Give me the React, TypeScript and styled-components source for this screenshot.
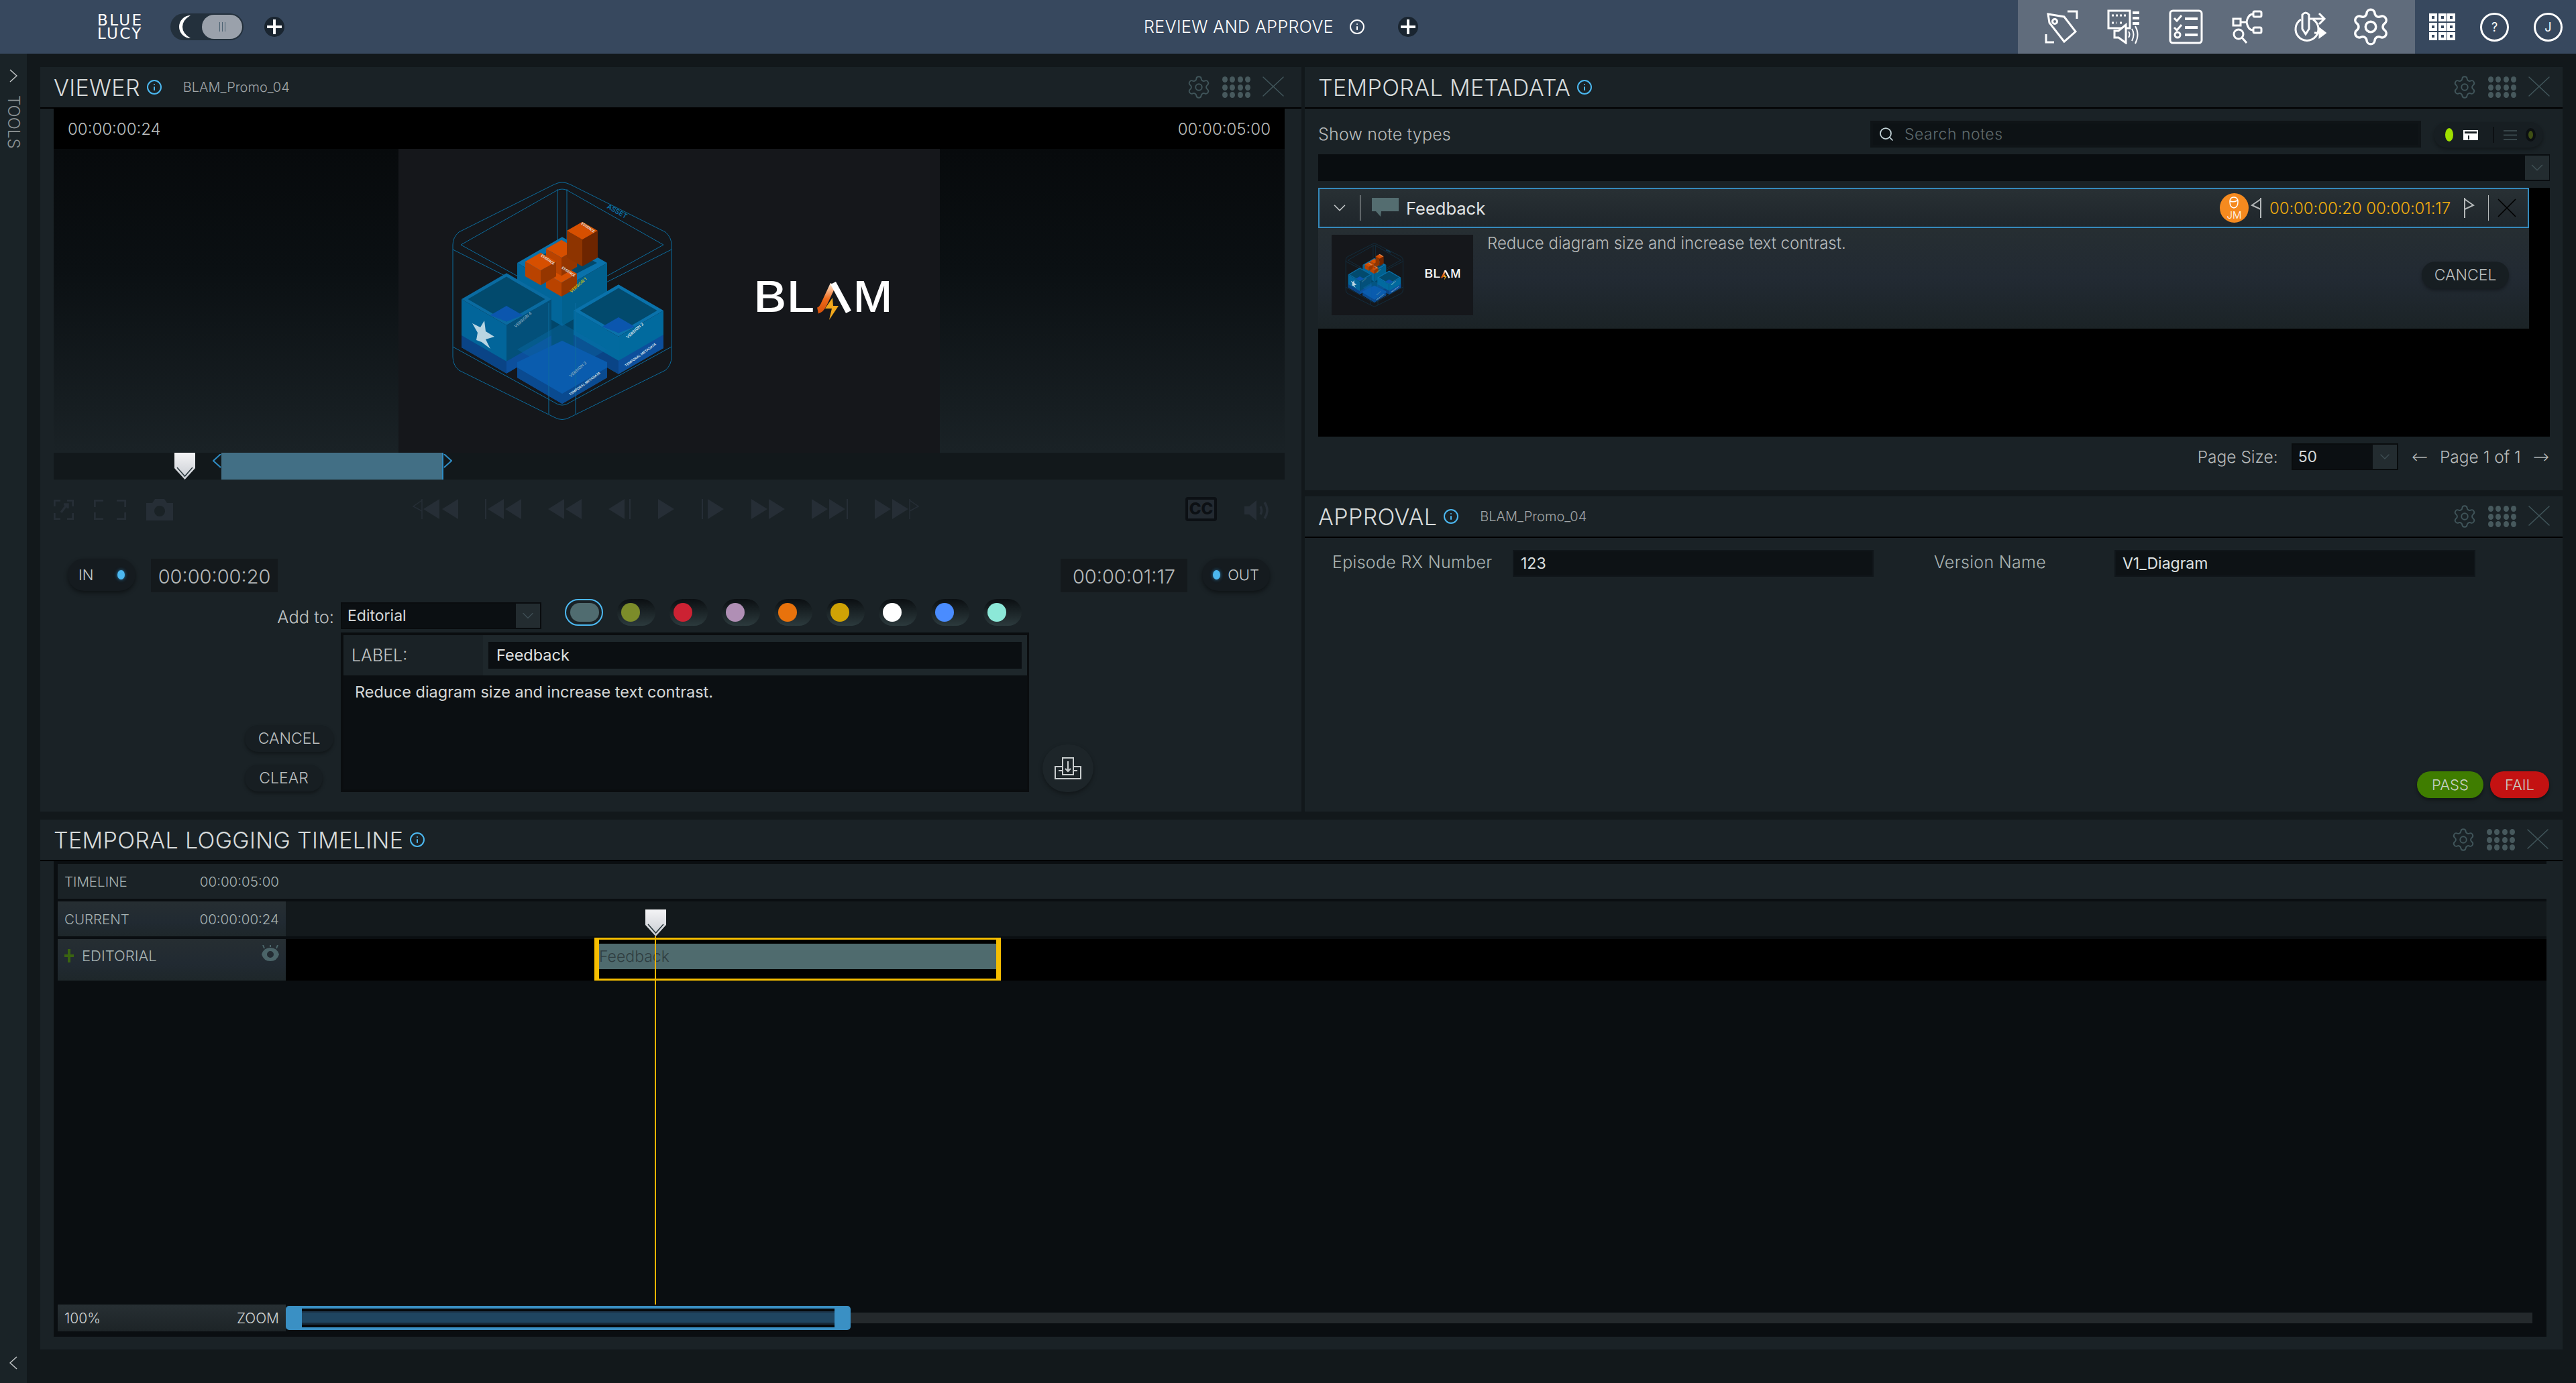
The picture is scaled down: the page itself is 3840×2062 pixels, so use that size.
import React from 'react';
import styled, { createGlobalStyle } from 'styled-components';
import { ChevronDown, Info, Search, Settings, X } from 'lucide-react';

const GlobalStyle = createGlobalStyle`
  html, body {
    margin: 0;
    height: 2062px;
    overflow: hidden;
    background: #12181b;
    font-family: "Inter", "Open Sans", sans-serif;
    font-weight: 300;
    color: #c9cdce;
  }
  * { box-sizing: border-box; }
`;

const Shell = styled.div`
  width: 3840px;
  height: 2062px;
  display: flex;
  flex-direction: column;
`;

/* top bar */
const TopBar = styled.header`
  height: 80px;
  flex: none;
  display: flex;
  align-items: center;
  background: #37485e;
`;
const BrandGroup = styled.div`
  width: 1705px;
  flex: none;
  display: flex;
  align-items: center;
  padding-left: 145px;
`;
const Logo = styled.div`
  width: 70px;
  font-family: "DejaVu Sans", sans-serif;
  font-size: 23px;
  line-height: 20px;
  font-weight: 400;
  letter-spacing: 2.4px;
  color: #fff;
  white-space: nowrap;
`;
const ThemeToggle = styled.div`
  margin-left: 39px;
  width: 109px;
  height: 40px;
  border-radius: 20px;
  background: #23303c;
  display: flex;
  align-items: center;
  justify-content: space-between;
  padding: 0 2px 0 10px;
`;
const Knob = styled.div`
  width: 60px;
  height: 36px;
  border-radius: 18px;
  background: #9aa1ab;
  display: flex;
  align-items: center;
  justify-content: center;
  gap: 3px;
  & > i {
    width: 1px;
    height: 14px;
    background: #4b6272;
  }
`;
const RoundPlus = styled.button<{ $gap: number }>`
  margin-left: ${(p) => p.$gap}px;
  width: 30px;
  height: 30px;
  padding: 0;
  border: none;
  border-radius: 50%;
  background: #1a2530;
  display: flex;
  align-items: center;
  justify-content: center;
`;
const PageTitle = styled.div`
  width: 287px;
  font-size: 25px;
  font-weight: 300;
  letter-spacing: 0.45px;
  color: #fff;
  white-space: nowrap;
`;
const CenterInfo = styled(Info)`
  margin-left: 19px;
  color: #fff;
`;
const ToolTray = styled.nav`
  margin-left: auto;
  width: 592px;
  height: 80px;
  background: #606c7c;
  display: flex;
  align-items: center;
  gap: 43px;
  padding-left: 40px;
`;
const UserTray = styled.div`
  width: 240px;
  display: flex;
  align-items: center;
  gap: 37px;
  padding-left: 21px;
`;
const UserCircle = styled.div`
  width: 43px;
  height: 43px;
  border: 3px solid #fff;
  border-radius: 50%;
  display: flex;
  align-items: center;
  justify-content: center;
  font-size: 18px;
  font-weight: 400;
  color: #fff;
`;

/* page layout */
const Main = styled.div`
  flex: 1;
  display: flex;
  min-height: 0;
`;
const SideRail = styled.aside`
  width: 40px;
  flex: none;
  background: #1a2327;
  display: flex;
  flex-direction: column;
  align-items: center;
  padding: 23px 0 20px;
  color: #c4c8c9;
`;
const RailLabel = styled.div`
  margin-top: 19px;
  writing-mode: vertical-rl;
  font-size: 24px;
  line-height: 1;
  color: #8d9496;
`;
const RailEnd = styled.div`
  margin-top: auto;
  display: flex;
`;
const Workspace = styled.div`
  flex: 1;
  padding: 20px 20px 50px;
  display: grid;
  grid-template-columns: 1880px 1875px;
  grid-template-rows: 1110px 790px;
  column-gap: 5px;
  row-gap: 12px;
`;
const RightStack = styled.div`
  display: grid;
  grid-template-rows: 631px 470px;
  row-gap: 9px;
`;
const Panel = styled.section<{ $wide?: boolean }>`
  background: #1a2226;
  display: flex;
  flex-direction: column;
  min-height: 0;
  ${(p) => (p.$wide ? 'grid-column: 1 / span 2;' : '')}
`;
const PanelHeader = styled.div<{ $pad: number; $left: number }>`
  height: 62px;
  flex: none;
  border-bottom: 2px solid #000;
  display: flex;
  align-items: center;
  padding: 0 ${(p) => p.$pad}px 0 ${(p) => p.$left}px;
`;
const PanelTitle = styled.h2`
  margin: 0;
  font-size: 34px;
  font-weight: 300;
  letter-spacing: 0.35px;
  color: #d8dcdc;
  white-space: nowrap;
`;
const InfoDot = styled(Info)`
  margin-left: 9px;
  color: #4cb8f0;
  flex: none;
`;
const PanelSub = styled.span`
  margin-left: 31px;
  font-size: 20px;
  color: #a0a5a7;
`;
const HeaderTools = styled.div`
  margin-left: auto;
  display: flex;
  align-items: center;
  gap: 19px;
  color: #40555a;
`;
const Dots = styled.div`
  width: 42px;
  display: grid;
  grid-template-columns: repeat(4, 8px);
  grid-auto-rows: 9px;
  justify-content: space-between;
  row-gap: 2.5px;
  & > i {
    border-radius: 50%;
    background: #47595d;
  }
`;
const ThinX = styled(X)`
  width: 60px;
  height: 56px;
  margin: -14px -15px;
  transform: translateY(-1px);
`;
const PanelGear = styled(Settings)`
  margin: 0 -3px;
`;

/* viewer */
const ViewerBody = styled.div`
  flex: 1;
  display: flex;
  flex-direction: column;
  padding: 0 25px 0 20px;
  min-height: 0;
`;
const TimecodeBar = styled.div`
  height: 60px;
  flex: none;
  background: #000;
  display: flex;
  align-items: center;
  justify-content: space-between;
  padding: 0 21px;
  font-size: 24px;
  color: #bbbebe;
`;
const VideoRow = styled.div`
  height: 453px;
  flex: none;
  display: flex;
`;
const Letterbox = styled.div`
  flex: 1;
  background: linear-gradient(#070a0c 0%, #0b1013 40%, #1a2226 100%);
`;
const Frame = styled.div`
  width: 807px;
  flex: none;
  background: #15171b;
  & > svg {
    display: block;
    width: 100%;
    height: 100%;
  }
`;
const Scrubber = styled.div`
  height: 40px;
  flex: none;
  position: relative;
  background: #12181b;
`;
const ScrubHead = styled.svg`
  position: absolute;
  left: 180px;
  top: 0;
`;
const ScrubRange = styled.div`
  position: absolute;
  left: 250px;
  top: 0;
  width: 331px;
  height: 40px;
  background: #426f85;
  border-right: 2px solid #2f8cc4;
`;
const RangeFlag = styled.svg<{ $side: 'left' | 'right' }>`
  position: absolute;
  top: 2px;
  ${(p) => (p.$side === 'left' ? 'left: -13px;' : 'right: -15px;')}
`;
const Controls = styled.div`
  height: 118px;
  flex: none;
  display: flex;
  align-items: flex-start;
  padding: 29px 20px 0 0;
  color: #262e36;
`;
const ControlGroup = styled.div<{ $gap: number; $left?: number; $auto?: boolean }>`
  display: flex;
  align-items: center;
  gap: ${(p) => p.$gap}px;
  margin-left: ${(p) => (p.$auto ? 'auto' : `${p.$left ?? 0}px`)};
`;
const CcBadge = styled.div`
  width: 47px;
  height: 36px;
  border: 4px solid #0c1014;
  border-radius: 4px;
  display: flex;
  align-items: center;
  justify-content: center;
  font-size: 24px;
  line-height: 1;
  font-weight: 800;
  color: #0c1014;
  background: #232a31;
  margin-top: -3px;
`;
const EditorGrid = styled.div`
  display: grid;
  grid-template-columns: 428px 1026px 381px;
  grid-template-rows: 60px 50px 238px;
`;
const InRow = styled.div`
  display: flex;
  align-items: flex-start;
  gap: 23px;
  padding-left: 21px;
`;
const OutRow = styled.div`
  grid-column: 3;
  display: flex;
  align-items: flex-start;
  gap: 22px;
  padding-left: 47px;
`;
const MarkButton = styled.button<{ $out?: boolean }>`
  width: 101px;
  height: 48px;
  padding: 0 16px;
  border: none;
  border-radius: 24px;
  display: flex;
  flex-direction: ${(p) => (p.$out ? 'row-reverse' : 'row')};
  align-items: center;
  justify-content: space-between;
  background: #151b1f;
  box-shadow: 0 3px 6px rgba(0, 0, 0, 0.45);
  font: inherit;
  font-size: 22px;
  color: #c4c8c9;
`;
const BlueLed = styled.span`
  width: 11px;
  height: 14px;
  border-radius: 50%;
  background: #4cb8f0;
  box-shadow: 0 0 5px #2a7fb4;
`;
const TcBox = styled.div`
  width: 189px;
  height: 50px;
  background: #14191c;
  display: flex;
  align-items: center;
  justify-content: center;
  padding-top: 2px;
  font-size: 29px;
  color: #b6babb;
`;
const AddLabel = styled.div`
  grid-column: 1;
  display: flex;
  justify-content: flex-end;
  padding: 11px 10px 0 0;
  font-size: 25.5px;
  color: #bfc3c4;
`;
const AddRow = styled.div`
  grid-column: 2;
  display: flex;
  align-items: flex-start;
`;
const SelectBox = styled.div<{ $w: number; $caret: number }>`
  width: ${(p) => p.$w}px;
  height: 40px;
  background: #0b0f12;
  border: 2px solid #090c0e;
  display: flex;
  align-items: center;
  justify-content: space-between;
  padding-left: 8px;
  font-size: 23px;
  font-weight: 400;
  color: #d5d8d8;
  & > span:last-child {
    width: ${(p) => p.$caret}px;
    align-self: stretch;
    background: #232c30;
    color: #3f4f54;
    display: flex;
    align-items: center;
    justify-content: center;
  }
`;
const AddSelect = styled(SelectBox)`
  margin-top: 5px;
`;
const Swatches = styled.div`
  margin-left: 35px;
  display: flex;
  gap: 21px;
`;
const Swatch = styled.div<{ $color: string; $active?: boolean }>`
  width: 57px;
  height: 40px;
  border-radius: 20px;
  display: flex;
  align-items: center;
  padding-left: 6px;
  background: ${(p) => (p.$active ? '#1a2226' : 'linear-gradient(#0b0f12, #2c3a3d)')};
  border: ${(p) => (p.$active ? '2px solid #4cb8f0' : 'none')};
  & > i {
    width: ${(p) => (p.$active ? '43px' : '28px')};
    height: 28px;
    border-radius: 14px;
    background: ${(p) => p.$color};
  }
`;
const ActionColumn = styled.div`
  grid-column: 1;
  display: flex;
  flex-direction: column;
  justify-content: flex-end;
  align-items: flex-start;
  gap: 19px;
  padding: 0 0 1px 285px;
`;
const PillButton = styled.button<{ $w: number }>`
  width: ${(p) => p.$w}px;
  height: 40px;
  padding: 0;
  border: none;
  border-radius: 20px;
  background: #171e22;
  box-shadow: 0 3px 5px rgba(0, 0, 0, 0.35);
  font: inherit;
  font-size: 23px;
  color: #b9bdbe;
`;
const NoteBox = styled.div`
  grid-column: 2;
  display: flex;
  flex-direction: column;
  background: #0b0f12;
  border: 4px solid #0a0d0f;
  border-right-width: 3px;
`;
const LabelRow = styled.div`
  height: 60px;
  flex: none;
  display: flex;
  align-items: center;
  background: #1e272b;
`;
const LabelCell = styled.div`
  width: 208px;
  height: 100%;
  flex: none;
  background: #1a2226;
  display: flex;
  align-items: center;
  padding-left: 12px;
  font-size: 25px;
  color: #c2c6c7;
`;
const LabelInput = styled.div`
  flex: 1;
  height: 40px;
  margin: 0 8px 0 8px;
  background: #0b0f12;
  display: flex;
  align-items: center;
  padding: 0 0 2px 12px;
  font-size: 23.5px;
  font-weight: 400;
  color: #e0e3e3;
`;
const NoteText = styled.div`
  padding: 10px 17px;
  font-size: 23.5px;
  font-weight: 400;
  color: #d5d8d8;
`;
const ImportCell = styled.div`
  grid-column: 3;
  padding-left: 20px;
  display: flex;
  align-items: flex-end;
`;
const ImportButton = styled.button`
  width: 76px;
  height: 71px;
  padding: 0;
  border: none;
  border-radius: 36px;
  background: #1d2529;
  box-shadow: 0 3px 6px rgba(0, 0, 0, 0.35);
  display: flex;
  align-items: center;
  justify-content: center;
`;

/* temporal metadata */
const MetaBody = styled.div`
  flex: 1;
  display: flex;
  flex-direction: column;
  padding: 18px 19px 0 20px;
  min-height: 0;
`;
const MetaToolbar = styled.div`
  height: 40px;
  flex: none;
  display: flex;
  align-items: center;
  font-size: 25px;
  letter-spacing: 0.2px;
  color: #b6babb;
`;
const SearchBox = styled.div`
  margin-left: auto;
  width: 821px;
  height: 40px;
  background: #0d1215;
  border: 4px solid #0f1417;
  display: flex;
  align-items: center;
  gap: 15px;
  padding-left: 8px;
  font-size: 23px;
  letter-spacing: 0.5px;
  color: #5f6a6d;
`;
const ViewSwitch = styled.div`
  margin: 2px 10px 0 19px;
  width: 163px;
  height: 38px;
  border-radius: 19px;
  background: #171e22;
  box-shadow: 0 3px 5px rgba(0, 0, 0, 0.3);
  display: flex;
  align-items: center;
  padding-left: 17px;
`;
const SwitchLed = styled.span<{ $on?: boolean }>`
  width: ${(p) => (p.$on ? '12px' : '15px')};
  height: 20px;
  margin-right: ${(p) => (p.$on ? '15px' : '0')};
  margin-left: ${(p) => (p.$on ? '0' : '13px')};
  border-radius: 50%;
  background: ${(p) => (p.$on ? '#9fe000' : '#3f4f14')};
  border: ${(p) => (p.$on ? 'none' : '4px solid #0b0f12')};
`;
const SwitchBar = styled.span`
  width: 2px;
  height: 24px;
  margin: 0 14px 0 22px;
  background: #0c1013;
`;
const FilterRow = styled.div`
  margin-top: 10px;
  height: 40px;
  flex: none;
  background: #090d10;
  display: flex;
  justify-content: flex-end;
  padding: 2px 1px 2px 0;
  color: #3f4f54;
`;
const FilterCaret = styled.div`
  width: 36px;
  background: #232c30;
  display: flex;
  align-items: center;
  justify-content: center;
`;
const NoteList = styled.div`
  margin-top: 10px;
  height: 371px;
  flex: none;
  background: #000;
  padding-right: 31px;
`;
const NoteHead = styled.div`
  height: 60px;
  border: 2px solid #3589bb;
  background: linear-gradient(#283034, #1f262b);
  display: flex;
  align-items: center;
  font-size: 25.5px;
  font-weight: 400;
  color: #e2e4e4;
`;
const CaretCell = styled.div`
  width: 61px;
  height: 38px;
  flex: none;
  border-right: 1px solid #b5b9ba;
  display: flex;
  align-items: center;
  justify-content: center;
  color: #c9cdce;
`;
const Bubble = styled.svg`
  margin-left: 17px;
`;
const NoteName = styled.span`
  margin-left: 11px;
`;
const NoteMeta = styled.div`
  margin-left: auto;
  display: flex;
  align-items: center;
  height: 100%;
  padding-right: 6px;
  font-size: 24px;
  color: #f0ad0e;
  font-weight: 300;
`;
const Avatar = styled.div`
  width: 43px;
  height: 44px;
  margin-right: 3px;
  border-radius: 50%;
  background: #f58a1f;
  display: flex;
  flex-direction: column;
  align-items: center;
  justify-content: flex-end;
  padding-bottom: 4px;
  font-size: 15px;
  color: #fff;
  line-height: 1;
`;
const TimeRange = styled.span`
  margin: 0 20px 0 12px;
  letter-spacing: -0.1px;
  white-space: nowrap;
`;
const HeadDivider = styled.span`
  width: 1px;
  height: 38px;
  margin: 0 2px 0 20px;
  background: #b5b9ba;
`;
const NoteDetail = styled.div`
  height: 150px;
  background: linear-gradient(#262e32 0%, #222a33 50%, #1b2326 100%);
  display: flex;
  align-items: flex-start;
  padding: 10px 30px 0 20px;
`;
const Thumb = styled(Frame)`
  width: 211px;
  height: 120px;
`;
const DetailText = styled.p`
  margin: 0 0 0 21px;
  font-size: 24px;
  line-height: 26px;
  color: #b6babb;
`;
const DetailCancel = styled(PillButton)`
  margin: 40px 0 0 auto;
`;
const Pager = styled.div`
  padding: 10px 1px 0 0;
  display: flex;
  align-items: center;
  justify-content: flex-end;
  font-size: 24.5px;
  color: #b6babb;
`;
const PagerSelect = styled(SelectBox)`
  margin: 0 20px;
`;
const PagerArrow = styled.span`
  margin-right: 18px;
  font-family: "DejaVu Sans", sans-serif;
  font-size: 29px;
  line-height: 1;
  &:last-child {
    margin: 0 0 0 18px;
  }
`;

/* approval */
const ApprovalBody = styled.div`
  flex: 1;
  display: flex;
  flex-direction: column;
  padding: 18px 20px 20px 41px;
`;
const FieldRow = styled.div`
  display: grid;
  grid-template-columns: 269px 538px 90px 269px 538px;
  align-items: flex-start;
  font-size: 25px;
  letter-spacing: 0.3px;
  color: #a8b2b2;
`;
const FieldLabel = styled.span`
  padding-top: 3px;
`;
const FieldValue = styled.div`
  height: 40px;
  background: #0d1215;
  border: 2px solid #10161a;
  display: flex;
  align-items: center;
  padding-left: 10px;
  font-size: 23px;
  letter-spacing: 0;
  font-weight: 400;
  color: #dfe2e2;
`;
const VerdictRow = styled.div`
  margin-top: auto;
  display: flex;
  justify-content: flex-end;
  gap: 10px;
`;
const VerdictButton = styled.button<{ $bg: string; $w: number }>`
  width: ${(p) => p.$w}px;
  height: 40px;
  padding: 0;
  border: none;
  border-radius: 20px;
  background: ${(p) => p.$bg};
  box-shadow: 0 3px 5px rgba(0, 0, 0, 0.4);
  font: inherit;
  font-size: 22px;
  color: #c9d1c4;
`;

/* timeline */
const TimelineBody = styled.div`
  flex: 1;
  padding: 0 24px 19px 20px;
  display: flex;
  min-height: 0;
`;
const TimelineCanvas = styled.div`
  flex: 1;
  position: relative;
  background: #0a0e11;
  padding: 4px 0 0 6px;
  display: flex;
  flex-direction: column;
`;
const TimeRow = styled.div<{ $h: number; $gap?: number }>`
  height: ${(p) => p.$h}px;
  margin-bottom: ${(p) => p.$gap ?? 4}px;
  flex: none;
  display: flex;
`;
const RowLabel = styled.div<{ $flat?: boolean }>`
  width: 340px;
  flex: none;
  display: flex;
  align-items: center;
  justify-content: space-between;
  padding: 0 10px;
  background: ${(p) => (p.$flat ? '#1a2226' : 'linear-gradient(#262e32, #212a32 60%, #1e272a)')};
  font-size: 20.5px;
  color: #a7b3b3;
`;
const RowFill = styled.div<{ $bg: string }>`
  flex: 1;
  position: relative;
  background: ${(p) => p.$bg};
`;
const EditorialLabel = styled(RowLabel)`
  align-items: flex-start;
  padding-top: 12px;
  font-size: 22px;
  color: #a7b3b3;
`;
const EditorialName = styled.span`
  display: flex;
  align-items: center;
  gap: 12px;
`;
const EyeIcon = styled.svg`
  margin-top: -3px;
`;
const Clip = styled.div`
  position: absolute;
  left: 460px;
  top: -2px;
  bottom: 0;
  width: 606px;
  border: solid #f5bd00;
  border-width: 3px 7px;
  padding-top: 6px;
`;
const ClipBar = styled.div`
  height: 38px;
  background: #4f6b6e;
  display: flex;
  align-items: center;
  font-size: 23px;
  color: #2f3e41;
  overflow: hidden;
  white-space: nowrap;
`;
const PlayLine = styled.div`
  position: absolute;
  left: 896px;
  top: 112px;
  height: 549px;
  width: 2px;
  background: #f0b400;
`;
const PlayHandle = styled.svg`
  position: absolute;
  left: 882px;
  top: 72px;
`;
const ZoomRow = styled.div`
  margin-top: auto;
  margin-bottom: 8px;
  height: 40px;
  flex: none;
  display: flex;
  align-items: center;
`;
const ZoomLabel = styled.div`
  width: 340px;
  height: 40px;
  flex: none;
  display: flex;
  align-items: center;
  justify-content: space-between;
  padding: 0 10px;
  background: linear-gradient(#272f33, #1d2427);
  font-size: 21px;
  color: #d0d3d3;
`;
const ZoomTrack = styled.div`
  flex: 1;
  height: 16px;
  margin-right: 21px;
  position: relative;
  background: #24292c;
`;
const ZoomHandle = styled.div`
  position: absolute;
  left: 0;
  top: -10px;
  width: 842px;
  height: 36px;
  border: solid #3a90c4;
  border-width: 4px 24px;
  border-radius: 5px;
  background: #05080a;
  display: flex;
  align-items: center;
  &::after {
    content: '';
    flex: 1;
    height: 20px;
    background: linear-gradient(#1b3347 0 2px, #1f4560 2px 17px, #172a3a 17px);
  }
`;

/* icons */
const Line = ({ w, h, children }: { w: number; h: number; children: React.ReactNode }) => (
  <svg width={w} height={h} viewBox={`0 0 ${w} ${h}`} fill="none" stroke="#fff" strokeWidth="3">
    {children}
  </svg>
);

const TagIcon = () => (
  <Line w={50} h={50}>
    <path d="M5 6 L29 10 L46 32 L29 47 L7 19 Z" />
    <circle cx="15" cy="17" r="3.5" />
    <path d="M34 2 H48 V13 M2 36 V48 H14" />
  </Line>
);
const SoundIcon = () => (
  <Line w={49} h={52}>
    <path d="M2 2 H34 V28 H2 Z" />
    <path d="M7 9 H30 M7 20 H14 M19 20 H24" strokeDasharray="3 3" />
    <path d="M38 5 H48 M38 13 H48 M38 21 H48" strokeWidth="4" />
    <path d="M11 32 H17 L28 23 V50 L17 42 H11 Z" fill="#606c7c" />
    <path d="M32 33 Q35 37 32 42 M37 29 Q42 37 37 47 M42 25 Q49 37 42 51" strokeWidth="2" />
  </Line>
);
const ChecklistIcon = () => (
  <Line w={51} h={52}>
    <rect x="2" y="2" width="47" height="48" rx="4" />
    <path d="M8 13 L12 17 L19 9 M8 27 L12 31 L19 23" />
    <circle cx="13" cy="38" r="4" />
    <path d="M24 14 H43 M24 27 H43 M24 38 H43" strokeWidth="4" />
  </Line>
);
const NodesIcon = () => (
  <Line w={46} h={50}>
    <rect x="2" y="13" width="11" height="10" />
    <rect x="32" y="2" width="12" height="8" rx="2" />
    <rect x="32" y="26" width="12" height="8" rx="2" />
    <path d="M13 18 H22 M22 18 Q24 6 32 6 M22 18 Q24 30 32 30" />
    <circle cx="10" cy="36" r="7" />
    <path d="M15 41 L22 49" />
  </Line>
);
const RouteIcon = () => (
  <Line w={52} h={50}>
    <path d="M14 14 A17 17 0 1 0 32 14" />
    <path d="M16 28 V7 Q21 1 26 7 V28 L21 36 Z" fill="#606c7c" />
    <path d="M26 13 H48 M41 5 L49 13 L41 21" />
    <path d="M34 34 H43" />
    <path d="M42 28 L50 34 L42 40 Z" fill="#fff" />
  </Line>
);
const GearLarge = styled(Settings)`
  color: #fff;
  margin: -5px 0 -5px -8px;
`;
const AppsIcon = () => (
  <svg width="39" height="40" viewBox="0 0 39 40" fill="#fff">
    {[0, 14, 27].map((x) =>
      [0, 14, 28].map((y) => (
        <path key={`${x}-${y}`} fillRule="evenodd" d={`M${x} ${y}h12v12h-12zM${x + 4} ${y + 4}v4h4v-4z`} />
      )),
    )}
  </svg>
);
const ViewGridIcon = () => (
  <svg width="22" height="15" viewBox="0 0 22 15" fill="none" stroke="#fff" strokeWidth="2">
    <path d="M1 1 H21 V6 H1 Z" fill="none" />
    <path d="M1 8 H21 V14 H1 Z" fill="#fff" />
    <path d="M8 8 V14" stroke="#171e22" />
  </svg>
);
const ViewListIcon = () => (
  <svg width="20" height="15" viewBox="0 0 20 15" stroke="#38464a" strokeWidth="2">
    <path d="M0 1 H20 M0 7.5 H20 M0 14 H20" />
  </svg>
);
const ScrubHeadShape = () => (
  <>
    <defs>
      <linearGradient id="head" x1="0" y1="0" x2="0" y2="1">
        <stop offset="0" stopColor="#f4f4f6" />
        <stop offset="1" stopColor="#c8ccd2" />
      </linearGradient>
    </defs>
    <path d="M0 0 H31 V23 L15.5 40 L0 23 Z" fill="url(#head)" />
    <path d="M4 22 L15.5 35 L27 22" fill="none" stroke="#27353a" strokeWidth="1.5" />
  </>
);
const RailChevron = ({ left }: { left?: boolean }) => (
  <svg width="12" height="20" viewBox="0 0 12 20" fill="none" stroke="currentColor" strokeWidth="1.5">
    <path d={left ? 'M11 1 L1 10 L11 19' : 'M1 1 L11 10 L1 19'} />
  </svg>
);

const Flag = ({ dir }: { dir: 'left' | 'right' }) => (
  <svg width="16" height="30" viewBox="0 0 16 30" fill="none" stroke="#b5b9ba" strokeWidth="2">
    {dir === 'left' ? <path d="M15 0 V30 M15 2 L2 11 L15 17" /> : <path d="M1 0 V30 M1 2 L14 11 L1 17" />}
  </svg>
);

const Tri = ({ x, dir }: { x: number; dir: 1 | -1 }) => (
  <path d={dir > 0 ? `M${x} 0 L${x + 24} 15 L${x} 30 Z` : `M${x + 24} 0 L${x} 15 L${x + 24} 30 Z`} fill="currentColor" stroke="none" />
);
const Transport = ({ w, tris, marks = [], flag }: { w: number; tris: [number, 1 | -1][]; marks?: number[]; flag?: [number, 1 | -1] }) => (
  <svg width={w} height="30" viewBox={`0 0 ${w} 30`} fill="none" stroke="currentColor">
    {tris.map(([x, d]) => (
      <Tri key={x} x={x} dir={d} />
    ))}
    {marks.map((x) => (
      <path key={x} d={`M${x} 0 V30`} strokeWidth="2" />
    ))}
    {flag && <path d={`M${flag[0]} 0 V30 M${flag[0]} 2 L${flag[0] + flag[1] * 13} 11 L${flag[0]} 18`} strokeWidth="1.5" />}
  </svg>
);

/* the picture in the video frame, also used for the note thumbnail */
const face = (pts: number[][]) => pts.map((p) => p.join(',')).join(' ');

const IsoBox = ({ cx, cy, w, h, band = 0, top, left, right, rim = false, wall = '#024a6d', floor = '#0b56ae' }: {
  cx: number; cy: number; w: number; h: number; band?: number; top: string; left: string; right: string; rim?: boolean; wall?: string; floor?: string;
}) => {
  const d = w * 0.58;
  const inner = w * 0.86;
  const id = inner * 0.58;
  return (
    <g>
      <polygon points={face([[cx - w, cy], [cx, cy + d], [cx, cy + d + h], [cx - w, cy + h]])} fill={left} />
      <polygon points={face([[cx, cy + d], [cx + w, cy], [cx + w, cy + h], [cx, cy + d + h]])} fill={right} />
      {band > 0 && (
        <>
          <polygon points={face([[cx - w, cy + h - band], [cx, cy + d + h - band], [cx, cy + d + h], [cx - w, cy + h]])} fill="#0a4486" />
          <polygon points={face([[cx, cy + d + h - band], [cx + w, cy + h - band], [cx + w, cy + h], [cx, cy + d + h]])} fill="#0c4f9c" />
        </>
      )}
      <polygon points={face([[cx, cy - d], [cx + w, cy], [cx, cy + d], [cx - w, cy]])} fill={top} />
      {rim && (
        <>
          <polygon points={face([[cx, cy - id], [cx + inner, cy], [cx, cy + id], [cx - inner, cy]])} fill={wall} />
          <polygon points={face([[cx, cy + id * 0.3], [cx + inner * 0.42, cy + id * 0.72], [cx, cy + id * 1.0], [cx - inner * 0.42, cy + id * 0.72]])} fill={floor} />
        </>
      )}
    </g>
  );
};

const Tilted = ({ x, y, a, size = 6, fill = '#dfe8ee', children }: { x: number; y: number; a: number; size?: number; fill?: string; children: string }) => (
  <text x={x} y={y} transform={`rotate(${a} ${x} ${y})`} fontSize={size} fill={fill} fontFamily="Inter, sans-serif" fontWeight="600">
    {children}
  </text>
);

const FrameArt = ({ uid }: { uid: string }) => (
  <svg viewBox="0 0 807 453" preserveAspectRatio="none">
    <defs>
      <linearGradient id={`a-${uid}`} x1="0" y1="0" x2="0" y2="1">
        <stop offset="0" stopColor="#ffe2c8" />
        <stop offset="0.55" stopColor="#ee6a1a" />
        <stop offset="1" stopColor="#d9540c" />
      </linearGradient>
    </defs>
    <g fill="none" stroke="#0c6c9e" strokeWidth="1">
      <path d="M81 143 Q81 132 90 124 L232 53 Q244 47 256 53 L398 124 Q407 132 407 143 L407 310 Q407 322 398 330 L256 400 Q244 407 232 400 L90 330 Q81 322 81 310 Z" />
      <path d="M93 143 L236 62 Q244 58 252 62 L395 143 L252 222 Q244 226 236 222 Z" />
      <path d="M81 150 L236 228 Q244 232 252 228 L407 150" />
      <path d="M81 295 L236 380 Q244 384 252 380 L407 295" />
      <path d="M237 60 V225 M251 60 V225" />
    </g>
    <IsoBox cx={244} cy={170} w={67} h={110} top="#0a72ab" left="#02669a" right="#01618f" />
    <polygon points={face([[177, 225], [244, 264], [311, 225], [311, 280], [244, 319], [177, 280]])} fill="#01466a" />
    <polygon points={face([[244, 143], [296, 170], [244, 197], [192, 170]])} fill="#01486b" />
    <IsoBox cx={243} cy={186} w={23} h={21} top="#d64f00" left="#b94300" right="#953600" />
    <IsoBox cx={243} cy={149} w={23} h={27} top="#d64f00" left="#b94300" right="#953600" />
    <IsoBox cx={212} cy={168} w={23} h={22} top="#d64f00" left="#b94300" right="#953600" />
    <IsoBox cx={274} cy={122} w={23} h={40} top="#d64f00" left="#8e3400" right="#6d2500" />
    <IsoBox cx={161} cy={224} w={67} h={72} band={18} rim top="#0a6ba1" left="#02659a" right="#03507a" />
    <IsoBox cx={328} cy={241} w={67} h={56} band={20} rim top="#0a72ab" left="#026a9f" right="#016a9e" />
    <polygon points={face([[244, 260], [311, 299], [244, 338], [177, 299]])} fill="#0a6ba8" opacity="0.4" />
    <polygon points={face([[244, 286], [311, 318], [311, 341], [244, 380], [177, 341], [177, 318]])} fill="#0a5cae" />
    <polygon points={face([[177, 326], [244, 365], [311, 326], [311, 341], [244, 380], [177, 341]])} fill="#0a4a90" />
    <polygon points="110,260 122,266 128,256 130,272 143,280 130,284 137,298 124,288 116,285 118,274" fill="#b9d5e2" />
    <g fill="none" stroke="#0c6c9e" strokeWidth="1">
      <path d="M224 230 V395 M264 230 V395" />
    </g>
    <Tilted x={310} y={88} a={30} size={10} fill="#0b6ea5">ASSET</Tilted>
    <Tilted x={258} y={215} a={-42} size={6} fill="#c9c31a">VERSION 1</Tilted>
    <Tilted x={175} y={267} a={-42} size={6} fill="#7fa6bd">VERSION 4</Tilted>
    <Tilted x={342} y={283} a={-42} size={6}>VERSION 2</Tilted>
    <Tilted x={257} y={341} a={-42} size={6} fill="#7fa6bd">VERSION 3</Tilted>
    <Tilted x={256} y={368} a={-36} size={5}>TEMPORAL METADATA</Tilted>
    <Tilted x={339} y={325} a={-36} size={5}>TEMPORAL METADATA</Tilted>
    <Tilted x={272} y={112} a={34} size={5}>ESSENCE</Tilted>
    <Tilted x={212} y={160} a={34} size={5}>ESSENCE</Tilted>
    <Tilted x={243} y={178} a={34} size={5}>ESSENCE</Tilted>
    <text x={529} y={243} fontSize="63" fontFamily="Inter, sans-serif" fontWeight="500" fill="#fff" textLength="92" lengthAdjust="spacingAndGlyphs">BL</text>
    <path d="M625 241 Q630 240 634 232 L648 202" fill="none" stroke={`url(#a-${uid})`} strokeWidth="9" />
    <path d="M648 200 L671 243" fill="none" stroke="#fff" strokeWidth="9" />
    <path d="M647 222 L636 238 H646 L642 255 L656 234 H648 Z" fill="#f2a81c" />
    <text x={678} y={243} fontSize="63" fontFamily="Inter, sans-serif" fontWeight="500" fill="#fff" textLength="58" lengthAdjust="spacingAndGlyphs">M</text>
  </svg>
);

const dots12 = Array.from({ length: 12 }, (_, i) => <i key={i} />);

const PanelTools = () => (
  <HeaderTools>
    <PanelGear size={38} strokeWidth={1.2} />
    <Dots>{dots12}</Dots>
    <ThinX strokeWidth={0.6} preserveAspectRatio="none" />
  </HeaderTools>
);

const swatches = ['#7c8c2a', '#cc2233', '#b08fb5', '#e8720c', '#cfa205', '#ffffff', '#4a8cff', '#8ce8d8'];

const App = () => {
  return (
    <Shell>
      <GlobalStyle />
      <TopBar>
        <BrandGroup>
          <Logo>BLUE<br />LUCY</Logo>
          <ThemeToggle>
            <svg width="22" height="34" viewBox="0 0 22 34">
              <path d="M20 0 A17 17 0 0 0 20 34 Q8 27 8 17 Q8 7 20 0 Z" fill="#fff" />
            </svg>
            <Knob><i /><i /><i /></Knob>
          </ThemeToggle>
          <RoundPlus $gap={31}>
            <svg width="22" height="22" viewBox="0 0 22 22" stroke="#fff" strokeWidth="4"><path d="M11 0 V22 M0 11 H22" /></svg>
          </RoundPlus>
        </BrandGroup>
        <PageTitle>REVIEW AND APPROVE</PageTitle>
        <CenterInfo size={24} strokeWidth={2} />
        <RoundPlus $gap={49}>
          <svg width="22" height="22" viewBox="0 0 22 22" stroke="#fff" strokeWidth="4"><path d="M11 0 V22 M0 11 H22" /></svg>
        </RoundPlus>
        <ToolTray>
          <TagIcon />
          <SoundIcon />
          <ChecklistIcon />
          <NodesIcon />
          <RouteIcon />
          <GearLarge size={62} strokeWidth={1.35} />
        </ToolTray>
        <UserTray>
          <AppsIcon />
          <UserCircle>?</UserCircle>
          <UserCircle>J</UserCircle>
        </UserTray>
      </TopBar>

      <Main>
        <SideRail>
          <RailChevron />
          <RailLabel>TOOLS</RailLabel>
          <RailEnd><RailChevron left /></RailEnd>
        </SideRail>
        <Workspace>
          <Panel>
            <PanelHeader $left={20} $pad={27}>
              <PanelTitle>VIEWER</PanelTitle>
              <InfoDot size={24} strokeWidth={2} />
              <PanelSub>BLAM_Promo_04</PanelSub>
              <PanelTools />
            </PanelHeader>
            <ViewerBody>
              <TimecodeBar>
                <span>00:00:00:24</span>
                <span>00:00:05:00</span>
              </TimecodeBar>
              <VideoRow>
                <Letterbox />
                <Frame><FrameArt uid="main" /></Frame>
                <Letterbox />
              </VideoRow>
              <Scrubber>
                <ScrubHead width="31" height="40" viewBox="0 0 31 40"><ScrubHeadShape /></ScrubHead>
                <ScrubRange>
                  <RangeFlag $side="left" width="13" height="24" viewBox="0 0 13 24" fill="none" stroke="#2f8cc4" strokeWidth="2"><path d="M12 0 L1 10 L12 20" /></RangeFlag>
                  <RangeFlag $side="right" width="13" height="24" viewBox="0 0 13 24" fill="none" stroke="#2f8cc4" strokeWidth="2"><path d="M1 0 L12 10 L1 20" /></RangeFlag>
                </ScrubRange>
              </Scrubber>
              <Controls>
                <ControlGroup $gap={30}>
                  <svg width="30" height="30" viewBox="0 0 30 30" fill="none" stroke="currentColor" strokeWidth="3.5">
                    <path d="M1 10 V1 H10 M20 1 H29 V10 M29 20 V29 H20 M10 29 H1 V20 M11 19 L20 7 M15 7 H21 V13" />
                  </svg>
                  <svg width="48" height="30" viewBox="0 0 48 30" fill="none" stroke="currentColor" strokeWidth="3.5">
                    <path d="M1 11 V1 H14 M34 1 H47 V11 M47 19 V29 H34 M14 29 H1 V19" />
                  </svg>
                  <svg width="40" height="32" viewBox="0 0 40 32" fill="currentColor">
                    <path fillRule="evenodd" d="M0 6 H9 L13 0 H27 L31 6 H40 V32 H0 Z M20 10 A8 8 0 1 0 20 26 A8 8 0 1 0 20 10 Z" />
                  </svg>
                </ControlGroup>
                <ControlGroup $gap={40} $left={357}>
                  <Transport w={68} tris={[[16, -1], [44, -1]]} flag={[14, -1]} />
                  <Transport w={54} tris={[[4, -1], [30, -1]]} marks={[1]} />
                  <Transport w={50} tris={[[0, -1], [26, -1]]} />
                  <Transport w={34} tris={[[0, -1]]} marks={[32]} />
                  <Transport w={25} tris={[[0, 1]]} />
                  <Transport w={34} tris={[[9, 1]]} marks={[1]} />
                  <Transport w={50} tris={[[0, 1], [26, 1]]} />
                  <Transport w={54} tris={[[0, 1], [26, 1]]} marks={[53]} />
                  <Transport w={68} tris={[[0, 1], [26, 1]]} flag={[52, 1]} />
                </ControlGroup>
                <ControlGroup $gap={41} $auto>
                  <CcBadge>CC</CcBadge>
                  <svg width="40" height="32" viewBox="0 0 40 32" fill="none" stroke="currentColor" strokeWidth="3.5">
                    <path d="M0 10 H7 L18 1 V31 L7 22 H0 Z" fill="currentColor" stroke="none" />
                    <path d="M24 10 Q27 16 24 22 M30 4 Q38 16 30 28" />
                  </svg>
                </ControlGroup>
              </Controls>
              <EditorGrid>
                <InRow>
                  <MarkButton>IN<BlueLed /></MarkButton>
                  <TcBox>00:00:00:20</TcBox>
                </InRow>
                <OutRow>
                  <TcBox>00:00:01:17</TcBox>
                  <MarkButton $out>OUT<BlueLed /></MarkButton>
                </OutRow>
                <AddLabel>Add to:</AddLabel>
                <AddRow>
                  <AddSelect $w={299} $caret={36}>
                    <span>Editorial</span>
                    <span><ChevronDown size={28} strokeWidth={1.25} /></span>
                  </AddSelect>
                  <Swatches>
                    <Swatch $color="#506c70" $active><i /></Swatch>
                    {swatches.map((c) => (
                      <Swatch key={c} $color={c}><i /></Swatch>
                    ))}
                  </Swatches>
                </AddRow>
                <ActionColumn>
                  <PillButton $w={132}>CANCEL</PillButton>
                  <PillButton $w={116}>CLEAR</PillButton>
                </ActionColumn>
                <NoteBox>
                  <LabelRow>
                    <LabelCell>LABEL:</LabelCell>
                    <LabelInput>Feedback</LabelInput>
                  </LabelRow>
                  <NoteText>Reduce diagram size and increase text contrast.</NoteText>
                </NoteBox>
                <ImportCell>
                  <ImportButton>
                    <svg width="40" height="34" viewBox="0 0 40 34" fill="none" stroke="#c9cdce" strokeWidth="2">
                      <path d="M12 14 V1 H28 V14 M20 6 V21 M16 17 L20 21 L24 17" />
                      <path d="M12 14 H1 V32 H39 V14 H28 V26 H12 Z" />
                      <path d="M6 20 H12 M28 20 H34" />
                    </svg>
                  </ImportButton>
                </ImportCell>
              </EditorGrid>
            </ViewerBody>
          </Panel>

          <RightStack>
            <Panel>
              <PanelHeader $left={20} $pad={20}>
                <PanelTitle>TEMPORAL METADATA</PanelTitle>
                <InfoDot size={24} strokeWidth={2} />
                <PanelTools />
              </PanelHeader>
              <MetaBody>
                <MetaToolbar>
                  <span>Show note types</span>
                  <SearchBox>
                    <Search size={24} color="#c4d4d8" strokeWidth={1.75} />
                    <span>Search notes</span>
                  </SearchBox>
                  <ViewSwitch>
                    <SwitchLed $on />
                    <ViewGridIcon />
                    <SwitchBar />
                    <ViewListIcon />
                    <SwitchLed />
                  </ViewSwitch>
                </MetaToolbar>
                <FilterRow>
                  <FilterCaret><ChevronDown size={30} strokeWidth={1.25} /></FilterCaret>
                </FilterRow>
                <NoteList>
                  <NoteHead>
                    <CaretCell><ChevronDown size={30} strokeWidth={1.25} /></CaretCell>
                    <Bubble width="40" height="30" viewBox="0 0 40 30">
                      <path d="M0 0 H40 V20 H14 L13 28 L6 20 H0 Z" fill="#546d70" />
                    </Bubble>
                    <NoteName>Feedback</NoteName>
                    <NoteMeta>
                      <Avatar>
                        <svg width="16" height="20" viewBox="0 0 16 20" fill="none" stroke="#fff" strokeWidth="1.5">
                          <path d="M2 8 Q2 1 8 1 Q14 1 14 8 Q14 16 8 17 Q2 16 2 8 Z M3 7 Q8 9 13 6" />
                        </svg>
                        JM
                      </Avatar>
                      <Flag dir="left" />
                      <TimeRange>00:00:00:20 00:00:01:17</TimeRange>
                      <Flag dir="right" />
                      <HeadDivider />
                      <X size={50} strokeWidth={0.8} color="#000" />
                    </NoteMeta>
                  </NoteHead>
                  <NoteDetail>
                    <Thumb><FrameArt uid="thumb" /></Thumb>
                    <DetailText>Reduce diagram size and increase text contrast.</DetailText>
                    <DetailCancel $w={130}>CANCEL</DetailCancel>
                  </NoteDetail>
                </NoteList>
                <Pager>
                  <span>Page Size:</span>
                  <PagerSelect $w={159} $caret={36}>
                    <span>50</span>
                    <span><ChevronDown size={24} strokeWidth={1.25} /></span>
                  </PagerSelect>
                  <PagerArrow>←</PagerArrow>
                  <span>Page 1 of 1</span>
                  <PagerArrow>→</PagerArrow>
                </Pager>
              </MetaBody>
            </Panel>

            <Panel>
              <PanelHeader $left={20} $pad={20}>
                <PanelTitle>APPROVAL</PanelTitle>
                <InfoDot size={24} strokeWidth={2} />
                <PanelSub>BLAM_Promo_04</PanelSub>
                <PanelTools />
              </PanelHeader>
              <ApprovalBody>
                <FieldRow>
                  <FieldLabel>Episode RX Number</FieldLabel>
                  <FieldValue>123</FieldValue>
                  <span />
                  <FieldLabel>Version Name</FieldLabel>
                  <FieldValue>V1_Diagram</FieldValue>
                </FieldRow>
                <VerdictRow>
                  <VerdictButton $bg="#3f7d00" $w={99}>PASS</VerdictButton>
                  <VerdictButton $bg="#c41212" $w={88}>FAIL</VerdictButton>
                </VerdictRow>
              </ApprovalBody>
            </Panel>
          </RightStack>

          <Panel $wide>
            <PanelHeader $left={20} $pad={22}>
              <PanelTitle>TEMPORAL LOGGING TIMELINE</PanelTitle>
              <InfoDot size={24} strokeWidth={2} />
              <PanelTools />
            </PanelHeader>
            <TimelineBody>
              <TimelineCanvas>
                <TimeRow $h={52}>
                  <RowLabel $flat>
                    <span>TIMELINE</span>
                    <span>00:00:05:00</span>
                  </RowLabel>
                  <RowFill $bg="#1a2226" />
                </TimeRow>
                <TimeRow $h={52}>
                  <RowLabel>
                    <span>CURRENT</span>
                    <span>00:00:00:24</span>
                  </RowLabel>
                  <RowFill $bg="#13191c" />
                </TimeRow>
                <TimeRow $h={62} $gap={0}>
                  <EditorialLabel>
                    <EditorialName>
                      <svg width="14" height="20" viewBox="0 0 14 20" stroke="#3a6410" strokeWidth="4"><path d="M7 0 V20 M0 10 H14" /></svg>
                      EDITORIAL
                    </EditorialName>
                    <EyeIcon width="26" height="24" viewBox="0 0 26 24" fill="#4b6468">
                      <path fillRule="evenodd" d="M13 4 Q23 4 26 14 Q23 24 13 24 Q3 24 0 14 Q3 4 13 4 Z M13 9 A5 5 0 1 0 13 19 A5 5 0 1 0 13 9 Z" />
                      <path d="M4 5 L2 0 M13 3 V0 M22 5 L24 0" stroke="#4b6468" strokeWidth="2" />
                    </EyeIcon>
                  </EditorialLabel>
                  <RowFill $bg="#000">
                    <Clip>
                      <ClipBar>Feedback</ClipBar>
                    </Clip>
                  </RowFill>
                </TimeRow>
                <PlayHandle width="31" height="40" viewBox="0 0 31 40"><ScrubHeadShape /></PlayHandle>
                <PlayLine />
                <ZoomRow>
                  <ZoomLabel>
                    <span>100%</span>
                    <span>ZOOM</span>
                  </ZoomLabel>
                  <ZoomTrack><ZoomHandle /></ZoomTrack>
                </ZoomRow>
              </TimelineCanvas>
            </TimelineBody>
          </Panel>
        </Workspace>
      </Main>
    </Shell>
  );
};

export default App;
